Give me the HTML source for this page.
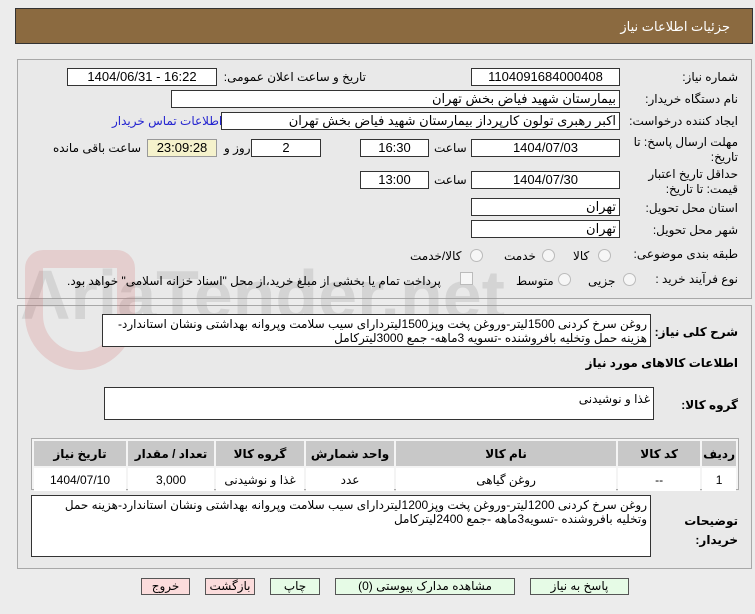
<!DOCTYPE html>
<html><head><meta charset="utf-8"><style>
body{margin:0;width:755px;height:614px;background:#ececec;font-family:"Liberation Sans","DejaVu Sans",sans-serif;font-size:12px;color:#000;position:relative;overflow:hidden}
.a{position:absolute}
.hdr{left:15px;top:8px;width:736px;height:34px;background:#8b6a40;border:1px solid #333}
.hdr span{position:absolute;right:22px;top:10px;color:#fff;font-size:13px}
.pan{border:1px solid #a8a8a8;background:#e9e9e9}
.box{position:absolute;background:#fff;border:1px solid #333;box-sizing:border-box;height:18px;line-height:16px;text-align:center;font-size:13px}
.r{text-align:right;padding-right:3px;direction:rtl}
.l{position:absolute;direction:rtl;white-space:nowrap;font-size:12px}
.rad{position:absolute;width:11px;height:11px;border-radius:50%;border:1px solid #bbb;background:#f6f6f6}
table{border-collapse:separate;border-spacing:2px}
td{text-align:center;font-size:12px;height:21px}
th{background:#c8c8c8;font-size:12px;height:23px}
.btn{position:absolute;top:578px;height:17px;border:1px solid #555;box-sizing:border-box;font-size:12px;text-align:center;line-height:15px;direction:rtl}
.g{background:#e6fbe6}.p{background:#fbdcdc}
</style></head><body>
<div class="a hdr"><span>جزئیات اطلاعات نیاز</span></div>
<div class="a pan" style="left:17px;top:59px;width:733px;height:238px"></div>
<div class="a pan" style="left:17px;top:305px;width:733px;height:262px"></div>
<div class="a" style="left:20px;top:255px;font-size:70px;font-weight:bold;color:rgba(150,150,150,0.25)">AriaTender.net</div>
<div class="a" style="left:25px;top:250px;width:110px;height:120px;border:18px solid rgba(210,110,110,0.22);border-radius:20px 20px 60px 60px;box-sizing:border-box"></div>

<div class="l" style="right:17px;top:70px">شماره نیاز:</div>
<div class="box" style="left:471px;top:68px;width:149px">1104091684000408</div>
<div class="l" style="right:389px;top:70px">تاریخ و ساعت اعلان عمومی:</div>
<div class="box" style="left:67px;top:68px;width:150px">1404/06/31 - 16:22</div>

<div class="l" style="right:17px;top:92px">نام دستگاه خریدار:</div>
<div class="box r" style="left:171px;top:90px;width:449px">بیمارستان شهید فیاض بخش تهران</div>

<div class="l" style="right:17px;top:114px">ایجاد کننده درخواست:</div>
<div class="box r" style="left:221px;top:112px;width:399px">اکبر رهبری تولون کارپرداز بیمارستان شهید فیاض بخش تهران</div>
<div class="l" style="left:112px;top:114px;color:#2424d0">اطلاعات تماس خریدار</div>

<div class="l" style="right:17px;top:135px;line-height:15px;text-align:right">مهلت ارسال پاسخ: تا<br>تاریخ:</div>
<div class="box" style="left:471px;top:139px;width:149px">1404/07/03</div>
<div class="l" style="left:434px;top:141px">ساعت</div>
<div class="box" style="left:360px;top:139px;width:69px">16:30</div>
<div class="box" style="left:251px;top:139px;width:70px">2</div>
<div class="l" style="left:224px;top:141px">روز و</div>
<div class="box" style="left:147px;top:139px;width:70px;background:#f5f2cc;border-color:#999">23:09:28</div>
<div class="l" style="left:53px;top:141px">ساعت باقی مانده</div>

<div class="l" style="right:17px;top:167px;line-height:15px;text-align:right">حداقل تاریخ اعتبار<br>قیمت: تا تاریخ:</div>
<div class="box" style="left:471px;top:171px;width:149px">1404/07/30</div>
<div class="l" style="left:434px;top:173px">ساعت</div>
<div class="box" style="left:360px;top:171px;width:69px">13:00</div>

<div class="l" style="right:17px;top:201px">استان محل تحویل:</div>
<div class="box r" style="left:471px;top:198px;width:149px">تهران</div>
<div class="l" style="right:17px;top:223px">شهر محل تحویل:</div>
<div class="box r" style="left:471px;top:220px;width:149px">تهران</div>

<div class="l" style="right:17px;top:247px">طبقه بندی موضوعی:</div>
<div class="rad" style="left:598px;top:249px"></div><div class="l" style="left:573px;top:249px">کالا</div>
<div class="rad" style="left:542px;top:249px"></div><div class="l" style="left:504px;top:249px">خدمت</div>
<div class="rad" style="left:470px;top:249px"></div><div class="l" style="left:410px;top:249px">کالا/خدمت</div>

<div class="l" style="right:17px;top:272px">نوع فرآیند خرید :</div>
<div class="rad" style="left:623px;top:273px"></div><div class="l" style="left:588px;top:274px">جزیی</div>
<div class="rad" style="left:558px;top:273px"></div><div class="l" style="left:516px;top:274px">متوسط</div>
<div class="a" style="left:460px;top:272px;width:11px;height:11px;border:1px solid #bbb;background:#f6f6f6"></div>
<div class="l" style="left:67px;top:274px">پرداخت تمام یا بخشی از مبلغ خرید،از محل "اسناد خزانه اسلامی" خواهد بود.</div>

<div class="l" style="right:17px;top:325px;font-weight:bold">شرح کلی نیاز:</div>
<div class="box r" style="left:102px;top:314px;width:549px;height:33px;line-height:14px;text-align:right;padding:2px 3px;font-size:12px">روغن سرخ کردنی 1500لیتر-وروغن پخت وپز1500لیتردارای سیب سلامت وپروانه بهداشتی ونشان استاندارد-هزینه حمل وتخلیه بافروشنده -تسویه 3ماهه- جمع 3000لیترکامل</div>
<div class="l" style="right:17px;top:356px;font-weight:bold">اطلاعات کالاهای مورد نیاز</div>
<div class="l" style="right:17px;top:398px;font-weight:bold">گروه کالا:</div>
<div class="box r" style="left:104px;top:387px;width:550px;height:33px;text-align:right;padding:3px;font-size:12px">غذا و نوشیدنی</div>

<div class="a" style="left:31px;top:438px;width:706px;height:50px;border:1px solid #aaa;background:#f4f4f4">
<table style="width:100%;direction:rtl;margin-top:0px">
<tr><th style="width:28px">ردیف</th><th style="width:80px">کد کالا</th><th>نام کالا</th><th style="width:86px">واحد شمارش</th><th style="width:86px">گروه کالا</th><th style="width:84px">تعداد / مقدار</th><th style="width:90px">تاریخ نیاز</th></tr>
<tr style="background:#fff"><td>1</td><td>--</td><td>روغن گیاهی</td><td>عدد</td><td>غذا و نوشیدنی</td><td>3,000</td><td>1404/07/10</td></tr>
</table></div>

<div class="l" style="right:17px;top:512px;font-weight:bold;line-height:19px;text-align:right">توضیحات<br>خریدار:</div>
<div class="box r" style="left:31px;top:495px;width:620px;height:62px;line-height:14px;text-align:right;padding:2px 3px;font-size:12px">روغن سرخ کردنی 1200لیتر-وروغن پخت وپز1200لیتردارای سیب سلامت وپروانه بهداشتی ونشان استاندارد-هزینه حمل وتخلیه بافروشنده -تسویه3ماهه -جمع 2400لیترکامل</div>

<div class="btn g" style="left:530px;width:99px">پاسخ به نیاز</div>
<div class="btn g" style="left:335px;width:180px">مشاهده مدارک پیوستی (0)</div>
<div class="btn g" style="left:270px;width:50px">چاپ</div>
<div class="btn p" style="left:205px;width:50px">بازگشت</div>
<div class="btn p" style="left:141px;width:49px">خروج</div>
</body></html>
